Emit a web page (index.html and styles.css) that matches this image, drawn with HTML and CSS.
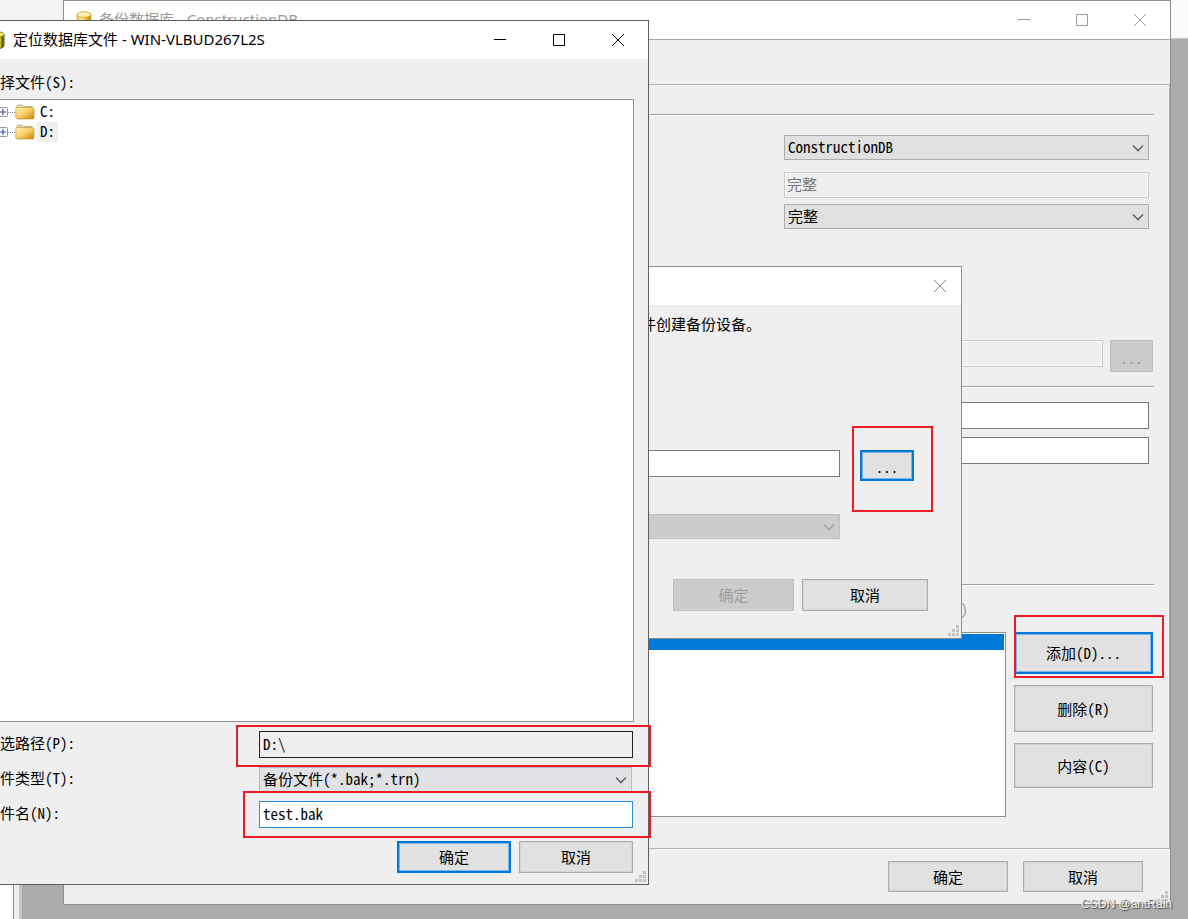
FILE: index.html
```html
<!DOCTYPE html>
<html lang="zh-CN">
<head>
<meta charset="utf-8">
<title>备份数据库</title>
<link rel="stylesheet" href="styles.css">
</head>
<body>
<svg class="defs" aria-hidden="true">
  <defs>
    <linearGradient id="gold" x1="0" x2="1"><stop offset="0" stop-color="#f2c84e"/><stop offset=".3" stop-color="#fbe9a0"/><stop offset=".7" stop-color="#e8ae12"/><stop offset="1" stop-color="#c98f10"/></linearGradient>
    <linearGradient id="folder" x1="0" y1="0" x2="1" y2="1"><stop offset="0" stop-color="#fff3b8"/><stop offset=".5" stop-color="#f6cf62"/><stop offset="1" stop-color="#cc8208"/></linearGradient>
    <symbol id="chevron" viewBox="0 0 12 8"><path d="M1 1.5 6 6.5 11 1.5" fill="none" stroke="currentColor" stroke-width="1.6"/></symbol>
    <symbol id="minimize" viewBox="0 0 12 12"><path d="M0 5.5H12" stroke="currentColor" fill="none"/></symbol>
    <symbol id="maximize" viewBox="0 0 12 12"><path d="M.5.5h11v11H.5z" stroke="currentColor" fill="none"/></symbol>
    <symbol id="close" viewBox="0 0 12 12"><path d="M0 0 12 12M12 0 0 12" stroke="currentColor" fill="none"/></symbol>
    <symbol id="grip" viewBox="0 0 11 11"><path d="M8 0h3v3H8zM4 4h3v3H4zM8 4h3v3H8zM0 8h3v3H0zM4 8h3v3H4zM8 8h3v3H8z" fill="#c3c3c3"/></symbol>
    <symbol id="database" viewBox="0 0 16 18"><path d="M1 3.500v11C1 16.400 4 17.500 8 17.500s7-1.100 7-3v-11z" fill="url(#gold)" stroke="#c49018" stroke-width=".6"/><ellipse cx="8" cy="3.500" rx="7" ry="2.800" fill="#fdf0b4" stroke="#d5a42c" stroke-width=".8"/></symbol>
    <symbol id="database-dark" viewBox="0 0 16 18"><path d="M1 3.500v11C1 16.400 4 17.500 8 17.500s7-1.100 7-3v-11z" fill="#c5bd14" stroke="#55520c"/><path d="M13.500 5v11" stroke="#55520c" stroke-width="2"/><ellipse cx="8" cy="3.500" rx="7" ry="2.800" fill="#f6ee72" stroke="#8f8918"/></symbol>
    <symbol id="folder-icon" viewBox="0 0 20 16"><path d="M2 4V2.200Q2 1 3.200 1H7l1.500 1.500H17V4" fill="#e9dfb5" stroke="#b9a56a" stroke-width=".8"/><path d="M.8 4.500 2 3.500h15.500l1.500 1v9l-1 1.500H2L.8 13.500z" fill="url(#folder)" stroke="#b98a2c" stroke-width=".6"/></symbol>
    <symbol id="expander" viewBox="0 0 10 10"><rect x=".5" y=".5" width="9" height="9" rx="1" fill="#f6f6f6" stroke="#999"/><path d="M2 5h6M5 2v6" stroke="#3c5aa8" stroke-width="1.200"/></symbol>
  </defs>
</svg>

<div class="desktop">
  <div class="backdrop">
    <div class="backdrop-top"></div>
    <div class="backdrop-body"><div class="backdrop-side"></div><div class="backdrop-split"></div></div>
  </div>

  <section class="window main-window">
    <header class="titlebar main-title">
      <svg class="icon-db"><use href="#database"/></svg>
      <h1 class="title">备份数据库<span class="title-latin"> - ConstructionDB</span></h1>
      <div class="caption-buttons">
        <button class="caption" aria-label="最小化"><svg><use href="#minimize"/></svg></button>
        <button class="caption" aria-label="最大化"><svg><use href="#maximize"/></svg></button>
        <button class="caption" aria-label="关闭"><svg><use href="#close"/></svg></button>
      </div>
    </header>
    <div class="toolbar"></div>
    <div class="page">
      <div class="rule"></div>
      <div class="fields source-fields">
        <div class="select-box"><select class="select" aria-label="数据库"><option>ConstructionDB</option></select><svg class="chevron"><use href="#chevron"/></svg></div>
        <input class="input input-off" aria-label="恢复模式" value="完整" disabled>
        <div class="select-box"><select class="select" aria-label="备份类型"><option>完整</option></select><svg class="chevron"><use href="#chevron"/></svg></div>
      </div>
      <div class="path-row">
        <input class="input input-off" aria-label="文件" disabled>
        <button class="button dots" disabled>...</button>
      </div>
      <div class="rule"></div>
      <div class="fields set-fields">
        <input class="input" aria-label="名称">
        <input class="input" aria-label="说明">
      </div>
      <div class="rule"></div>
      <div class="target-label">)</div>
      <div class="target">
        <div class="list"><div class="list-selected"></div></div>
        <div class="target-buttons">
          <button class="button button-default add">添加(D)...</button>
          <button class="button remove">删除(R)</button>
          <button class="button contents">内容(C)</button>
        </div>
      </div>
    </div>
    <footer class="main-footer">
      <button class="button">确定</button>
      <button class="button">取消</button>
    </footer>
    <svg class="grip"><use href="#grip"/></svg>
  </section>

  <section class="window device-window">
    <header class="titlebar">
      <div class="caption-buttons"><button class="caption" aria-label="关闭"><svg><use href="#close"/></svg></button></div>
    </header>
    <div class="device-body">
      <p class="device-text">件创建备份设备。</p>
      <div class="device-row">
        <input class="input" aria-label="文件名">
        <button class="button button-default browse dots">...</button>
      </div>
      <div class="select-box device-select"><select class="select" aria-label="备份设备" disabled></select><svg class="chevron"><use href="#chevron"/></svg></div>
      <div class="device-footer">
        <button class="button" disabled>确定</button>
        <button class="button">取消</button>
      </div>
    </div>
    <svg class="grip"><use href="#grip"/></svg>
  </section>

  <section class="window file-window">
    <header class="titlebar">
      <svg class="icon-db"><use href="#database-dark"/></svg>
      <h2 class="title">定位数据库文件<span class="title-latin"> - WIN-VLBUD267L2S</span></h2>
      <div class="caption-buttons">
        <button class="caption" aria-label="最小化"><svg><use href="#minimize"/></svg></button>
        <button class="caption" aria-label="最大化"><svg><use href="#maximize"/></svg></button>
        <button class="caption" aria-label="关闭"><svg><use href="#close"/></svg></button>
      </div>
    </header>
    <div class="file-body">
      <div class="tree-label">选择文件(S):</div>
      <ul class="tree">
        <li class="node"><svg class="expander"><use href="#expander"/></svg><span class="branch"></span><svg class="folder"><use href="#folder-icon"/></svg><span class="node-name">C:</span></li>
        <li class="node"><svg class="expander"><use href="#expander"/></svg><span class="branch"></span><svg class="folder"><use href="#folder-icon"/></svg><span class="node-name node-current">D:</span></li>
      </ul>
      <div class="file-form">
        <label for="path">所选路径(P):</label>
        <input id="path" class="input path" value="D:\" readonly>
        <label for="type">文件类型(T):</label>
        <div class="select-box"><select id="type" class="select type"><option>备份文件(*.bak;*.trn)</option></select><svg class="chevron"><use href="#chevron"/></svg></div>
        <label for="name">文件名(N):</label>
        <input id="name" class="input name" value="test.bak">
      </div>
      <div class="file-footer">
        <button class="button button-default">确定</button>
        <button class="button">取消</button>
      </div>
    </div>
    <svg class="grip"><use href="#grip"/></svg>
  </section>

  <div class="mark mark-path"></div>
  <div class="mark mark-name"></div>
  <div class="mark mark-browse"></div>
  <div class="mark mark-add"></div>
  <div class="watermark">CSDN @antRain</div>
</div>
</body>
</html>
```
FILE: styles.css
```css
* { box-sizing: border-box; }

body {
  margin: 0;
  font: 15px/20px "Noto Sans Mono CJK SC", "Noto Sans CJK SC", monospace;
  color: #000;
}

button, input, select { font: inherit; color: inherit; margin: 0; border-radius: 0; }
h1, h2, p, ul { margin: 0; padding: 0; font-weight: 400; }
.defs { position: absolute; width: 0; height: 0; }

.desktop { position: relative; height: 100vh; overflow: hidden; }

.backdrop { display: flex; flex-direction: column; height: 100%; background: #ababab; }
.backdrop-top { height: 39px; background: linear-gradient(90deg, #f3f3f3, #fbfbfb); border-bottom: 1px solid #c4c4c4; }
.backdrop-body { flex: 1; display: flex; }
.backdrop-side { width: 14px; background: #fff; border-right: 1px solid #8f919c; }
.backdrop-split { width: 8px; background: #eee; border-right: 3px solid #c6c6c9; }

/* Windows */
.window { position: absolute; display: flex; flex-direction: column; background: #efefef; border: 1px solid #8f8f8f; }
.main-window { left: 63px; right: 17px; top: 0; bottom: 14px; }
.device-window { left: 400px; width: 562px; top: 266px; }
.file-window { left: -16px; width: 665px; top: 20px; bottom: 34px; border-color: #5f5f5f; }

.titlebar { display: flex; align-items: center; height: 38px; background: #fff; flex: none; }
.main-title { height: 39px; border-bottom: 1px solid #a5a5a5; color: #999; }
.device-window .titlebar { color: #888; }
.icon-db { width: 16px; height: 18px; margin: 0 8px 0 4px; flex: none; }
.main-title .icon-db { height: 20px; margin: 0 7px 0 12px; }
.title { font-size: 15px; line-height: 20px; white-space: nowrap; padding-bottom: 2px; }
.title-latin { font-family: "Noto Sans", sans-serif; }
.caption-buttons { display: flex; margin-left: auto; padding-right: 1px; }
.caption { width: 59px; height: 36px; padding: 0; border: 0; background: none; display: grid; place-items: center; }
.caption svg { width: 12px; height: 12px; }
.main-title .caption { width: 58px; }
.device-window .caption { width: 40px; }
.grip { position: absolute; right: 2px; bottom: 2px; width: 11px; height: 11px; }

/* Controls */
.button { height: 31px; padding: 0; border: 1px solid #adadad; background: #e1e1e1; text-align: center; line-height: 20px; box-shadow: inset 0 0 0 1px #d4d4d4; }
.button-default { border: 2px solid #0078d7; box-shadow: inset 0 0 0 1px #7eb5e2; }
.button:disabled { background: #ccc; border-color: #bfbfbf; color: #9d9d9d; box-shadow: none; }
.input { width: 100%; min-width: 0; height: 27px; padding: 0 3px 3px; border: 1px solid #7a7a7a; background: #fff; outline: 0; }
.input-off { border-color: #ccc; background: #efefef; color: #777; padding: 0 2px 3px; box-shadow: inset 0 0 0 1px #fbfbfb; }
.select-box { position: relative; display: flex; }
.select { appearance: none; width: 100%; height: 25px; padding: 0 24px 1px 3px; border: 1px solid #adadad; background: #e1e1e1; opacity: 1; }
.select:disabled { background: #ccc; border-color: #bfbfbf; }
.chevron { position: absolute; right: 5px; top: 9px; width: 12px; height: 8px; color: #666; pointer-events: none; }
.select:disabled + .chevron { color: #a5a5a5; }

/* Backup window */
.toolbar { height: 44px; flex: none; }
.page { flex: 1; min-height: 0; padding: 29px 15px 0 300px; border: solid #b3b5bd; border-width: 1px 1px 1px 0; }
.rule { height: 2px; background: #a3a3a3; border-bottom: 1px solid #fafafa; }
.fields { display: grid; padding-right: 5px; }
.source-fields { padding: 19px 5px 0 420px; row-gap: 6px; }
.source-fields .input { height: 26px; margin-top: 6px; }
.path-row { display: flex; gap: 7px; margin: 111px 1px 14px 0; }
.path-row .button { width: 43px; height: 32px; flex: none; }
.set-fields { padding-top: 14px; padding-bottom: 120px; row-gap: 8px; }
.target-label { width: 604px; padding: 13px 0; text-align: right; color: #999; }
.target { display: flex; gap: 8px; padding-right: 1px; }
.list { flex: 1; height: 185px; padding: 1px; border: 1px solid #8d919b; background: #fff; }
.list-selected { height: 16px; background: #0078d7; }
.target-buttons { width: 139px; display: flex; flex-direction: column; gap: 11px; }
.dots { padding-top: 3px; }
.add { height: 42px; }
.remove { height: 47px; }
.contents { height: 45px; }
.main-footer { display: flex; justify-content: flex-end; gap: 15px; height: 55px; padding: 12px 27px 0 0; flex: none; }
.main-footer .button { width: 120px; }

/* Device window */
.device-body { padding: 9px 33px 27px 0; }
.device-text { padding-left: 240px; }
.device-row { display: flex; gap: 20px; margin-top: 116px; padding-right: 14px; }
.browse { width: 54px; flex: none; }
.device-select { margin: 33px 88px 0 0; }
.device-footer { display: flex; justify-content: flex-end; gap: 8px; margin-top: 40px; }
.device-footer .button { width: 126px; height: 32px; }
.device-footer .button:first-child { width: 121px; }

/* File window */
.file-body { flex: 1; min-height: 0; display: flex; flex-direction: column; padding: 13px 15px 11px 0; }
.tree-label { height: 27px; }
.tree-label, .file-form label { white-space: nowrap; }
.tree { flex: 1; list-style: none; margin-right: -1px; padding: 2px 0 0 12px; border: 1px solid #8d919b; background: #fff; }
.node { display: flex; align-items: center; height: 20px; }
.expander { width: 10px; height: 10px; }
.branch { width: 7px; border-top: 1px dotted #888; }
.folder { width: 20px; height: 16px; }
.node-name { margin-left: 2px; padding: 0 3px; height: 20px; line-height: 18px; }
.node-current { background: #f0f0f0; }
.file-form { display: grid; grid-template-columns: 274px 1fr; row-gap: 9px; padding: 9px 0 0; align-items: center; }
.file-form label { padding-bottom: 3px; }
.file-form .path { background: #efefef; border-color: #222; }
.file-form .name { border-color: #2e90e0; }
.file-form .type { border-color: #b4bcc9; background: #e1e2e5; }
.file-form .select-box, .file-form .name { margin-right: 1px; }
.file-footer { display: flex; justify-content: flex-end; gap: 8px; padding-top: 13px; }
.file-footer .button { width: 114px; height: 32px; }

/* Callout frames */
.mark { position: absolute; border: 2px solid #ed1c24; pointer-events: none; }
.mark-path { left: 236px; top: 725px; width: 415px; height: 42px; }
.mark-name { left: 243px; top: 791px; width: 408px; height: 47px; }
.mark-browse { left: 852px; top: 426px; width: 81px; height: 86px; }
.mark-add { right: 24px; top: 615px; width: 150px; height: 63px; }
.watermark { position: absolute; right: 16px; bottom: 6px; font: 12px/18px "Liberation Sans", sans-serif; color: #eee; text-shadow: 1px 1px 1px #444; }
```
